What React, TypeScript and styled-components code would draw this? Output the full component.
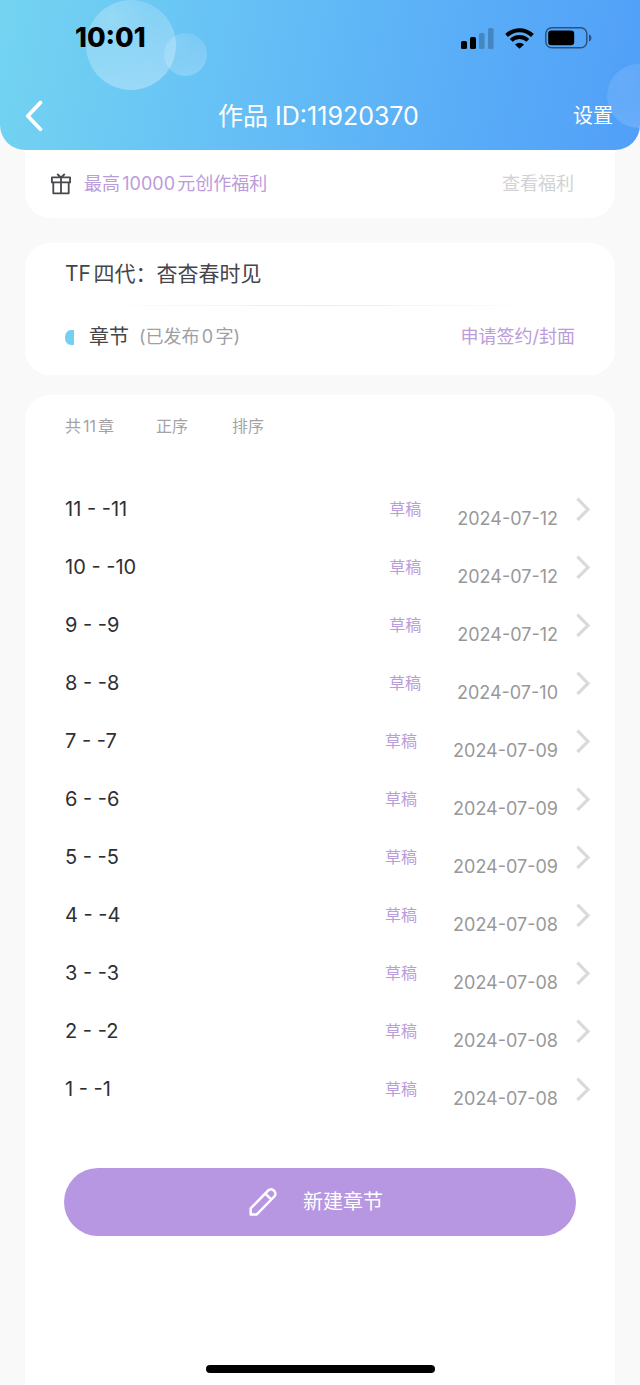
import React from 'react';
import styled, { createGlobalStyle } from 'styled-components';

const PURPLE = '#b797e2';
const PALE_PURPLE = '#bb9cdb';

const GlobalStyle = createGlobalStyle`
  * { box-sizing: border-box; }
  body {
    margin: 0;
    background: #f9f9f9;
    color: #45454a;
    font-family: Inter, "Noto Sans CJK SC", sans-serif;
    text-autospace: normal;
  }
  button {
    border: 0;
    padding: 0;
    background: none;
    color: inherit;
    font: inherit;
    cursor: pointer;
  }
  a { color: inherit; text-decoration: none; }
  h1, h2, ul { margin: 0; padding: 0; font-weight: 400; }
  svg { display: block; flex: none; }
`;

const Page = styled.div`
  display: flex;
  flex-direction: column;
  min-height: 100vh;
`;

const Header = styled.header`
  position: relative;
  overflow: hidden;
  border-radius: 0 0 25px 25px;
  background: linear-gradient(101deg, #73d3f1 2%, #68c3f5 32%, #5bb0f7 66%, #519ff9 100%);
`;

const Bubble = styled.span<{ $x: string; $y: number; $size: number; $strength: number }>`
  position: absolute;
  left: ${(p) => p.$x};
  top: ${(p) => p.$y}px;
  width: ${(p) => p.$size}px;
  height: ${(p) => p.$size}px;
  border-radius: 50%;
  opacity: ${(p) => p.$strength};
  background:
    radial-gradient(circle at 28% 18%, rgba(255, 255, 255, 0.35), transparent 38%),
    linear-gradient(165deg, rgba(255, 255, 255, 0.3), rgba(255, 255, 255, 0.75));
`;

const StatusBar = styled.div`
  position: relative;
  display: flex;
  align-items: center;
  justify-content: space-between;
  height: 76px;
  padding: 0 48px 0 75px;
  color: #000;
`;

const Clock = styled.time`
  font-size: 27px;
  line-height: 32px;
  font-weight: 800;
`;

const StatusIcons = styled.div`
  display: flex;
  align-items: center;
  gap: 11px;
`;

const NavBar = styled.nav`
  position: relative;
  display: grid;
  grid-template-columns: 1fr auto 1fr;
  align-items: center;
  height: 74px;
  padding: 6px 27px 0 24px;
  color: #fff;
`;

const BackButton = styled.button`
  justify-self: start;
`;

const PageTitle = styled.h1`
  font-size: 25px;
  line-height: 36px;
`;

const SettingsButton = styled.button`
  justify-self: end;
  font-size: 20px;
  line-height: 28px;
`;

const Content = styled.main`
  display: flex;
  flex: 1;
  flex-direction: column;
  padding: 0 25px;
`;

const Card = styled.section`
  border-radius: 25px;
  background: #fff;
`;

const BenefitCard = styled(Card)`
  display: flex;
  align-items: center;
  gap: 12px;
  height: 68px;
  margin-bottom: 25px;
  padding: 0 41px 0 25px;
  border-radius: 0 0 25px 25px;
  font-size: 18px;
  line-height: 26px;
`;

const BenefitText = styled.span`
  flex: 1;
  color: ${PALE_PURPLE};
`;

const BenefitLink = styled.a`
  color: #d2d2d4;
`;

const WorkCard = styled(Card)`
  margin-bottom: 20px;
  padding: 0 40px 7px;
`;

const WorkTitle = styled.h2`
  padding: 16px 0;
  font-size: 21px;
  line-height: 30px;
`;

const Divider = styled.div`
  height: 1px;
  background: linear-gradient(90deg, transparent 6%, #ececee 50%, transparent 94%);
`;

const SectionRow = styled.div`
  display: flex;
  align-items: center;
  height: 62px;
`;

const SectionMark = styled.span`
  width: 9px;
  height: 15px;
  margin-right: 15px;
  border-radius: 6px 0 0 6px / 7px 0 0 7px;
  background: #74d0f0;
`;

const SectionName = styled.h2`
  margin-right: 10px;
  font-size: 20px;
  line-height: 30px;
`;

const WordCount = styled.span`
  flex: 1;
  color: #a0a0a3;
  font-size: 18px;
  line-height: 26px;
`;

const ContractLink = styled.a`
  color: ${PALE_PURPLE};
  font-size: 18px;
  line-height: 26px;
`;

const ChapterCard = styled(Card)`
  display: flex;
  flex: 1;
  flex-direction: column;
  border-radius: 25px 25px 0 0;
`;

const Toolbar = styled.div`
  display: flex;
  align-items: center;
  gap: 42px;
  height: 62px;
  margin-bottom: 23px;
  padding: 0 40px;
  color: #a3a3a6;
  font-size: 16px;
  line-height: 24px;
`;

const SortButton = styled.button`
  margin-right: 2px;
`;

const ChapterList = styled.ul`
  list-style: none;
`;

const ChapterRow = styled.a`
  display: flex;
  align-items: center;
  height: 58px;
  padding: 0 24px 0 40px;
`;

const ChapterName = styled.span`
  flex: 1;
  color: #2f2f33;
  font-size: 20px;
  line-height: 28px;
`;

const ChapterState = styled.span`
  margin-right: 36px;
  color: ${PALE_PURPLE};
  font-size: 16px;
  line-height: 24px;
`;

const ChapterDate = styled.time`
  padding-top: 20px;
  margin-right: 17px;
  color: #98989a;
  font-size: 18px;
  line-height: 26px;
`;

const CreateButton = styled.button`
  display: flex;
  align-items: center;
  justify-content: center;
  gap: 26px;
  height: 68px;
  margin: 50px 39px 40px;
  padding-right: 8px;
  border-radius: 34px;
  background: ${PURPLE};
  color: #fff;
  font-size: 20px;
  line-height: 28px;
`;

const HomeIndicator = styled.div`
  align-self: center;
  width: 229px;
  height: 8px;
  margin: auto 0 12px;
  border-radius: 4px;
  background: #000;
`;

const SignalIcon = () => (
  <svg width="33" height="21" viewBox="0 0 33 21" aria-hidden="true">
    <rect x="0" y="13" width="6" height="8" rx="1.6" />
    <rect x="9" y="9" width="6" height="12" rx="1.6" />
    <rect x="18" y="5" width="5.6" height="16" rx="1.6" opacity="0.22" />
    <rect x="27" y="0" width="5.6" height="21" rx="1.6" opacity="0.22" />
  </svg>
);

const WifiIcon = () => (
  <svg width="29" height="21" viewBox="0 0 29 21" fill="none" stroke="#000" strokeWidth="4" aria-hidden="true">
    <path d="M1.6 7.5a18.4 18.4 0 0 1 25.8 0" />
    <path d="M6.2 12.4a11.6 11.6 0 0 1 16.6 0" />
    <path d="M14.5 20.8 10 16.5a6.4 6.4 0 0 1 9 0z" fill="#000" stroke="none" />
  </svg>
);

const BatteryIcon = () => (
  <svg width="47" height="22" viewBox="0 0 47 22" aria-hidden="true">
    <rect x="0.8" y="0.8" width="41" height="20" rx="6" fill="none" stroke="#000" strokeOpacity="0.5" strokeWidth="1.5" />
    <rect x="3.2" y="3.4" width="26" height="14.8" rx="3.2" />
    <path d="M44 7.2c3.2 1.4 3.2 6 0 7.4z" opacity="0.5" />
  </svg>
);

const BackIcon = () => (
  <svg width="20" height="32" viewBox="0 0 20 32" fill="none" stroke="#fff" strokeWidth="3.8" strokeLinecap="round" strokeLinejoin="round" aria-hidden="true">
    <path d="M16.4 2.6 3.8 16l12.6 13.2" />
  </svg>
);

const GiftIcon = () => (
  <svg width="22" height="22" viewBox="0 0 22 22" fill="none" stroke="#48484d" strokeWidth="1.8" strokeLinejoin="round" aria-hidden="true">
    <path d="M1.9 4.4h18.2v5H1.9zM3.3 9.4v10.9h15.4V9.4M11 4.4v15.9M7.2 1l3.8 3.4L14.8 1" />
  </svg>
);

const ChevronIcon = () => (
  <svg width="16" height="24" viewBox="0 0 16 24" fill="none" stroke="#dadadb" strokeWidth="3.2" aria-hidden="true">
    <path d="M2.4 1.6 13 12.4 2.4 23" />
  </svg>
);

const PencilIcon = () => (
  <svg width="28" height="28" viewBox="0 0 28 28" fill="none" stroke="#fff" strokeWidth="2.5" strokeLinejoin="round" aria-hidden="true">
    <path d="M1.7 26.4v-6.1L19.2 2.5a4 4 0 0 1 5.6 0l.5.5a4 4 0 0 1 0 5.5L7.8 26.4zM16.3 5.6l6.2 6" />
  </svg>
);

interface Chapter {
  no: number;
  date: string;
}

const chapters: Chapter[] = [
  { no: 11, date: '2024-07-12' },
  { no: 10, date: '2024-07-12' },
  { no: 9, date: '2024-07-12' },
  { no: 8, date: '2024-07-10' },
  { no: 7, date: '2024-07-09' },
  { no: 6, date: '2024-07-09' },
  { no: 5, date: '2024-07-09' },
  { no: 4, date: '2024-07-08' },
  { no: 3, date: '2024-07-08' },
  { no: 2, date: '2024-07-08' },
  { no: 1, date: '2024-07-08' },
];

export default function App() {
  return (
    <Page>
      <GlobalStyle />
      <Header>
        <Bubble $x="86px" $y={0} $size={90} $strength={0.45} />
        <Bubble $x="164px" $y={33} $size={43} $strength={0.3} />
        <Bubble $x="calc(100% - 33px)" $y={64} $size={64} $strength={0.2} />
        <StatusBar>
          <Clock>10:01</Clock>
          <StatusIcons>
            <SignalIcon />
            <WifiIcon />
            <BatteryIcon />
          </StatusIcons>
        </StatusBar>
        <NavBar>
          <BackButton type="button" aria-label="返回">
            <BackIcon />
          </BackButton>
          <PageTitle>作品 ID:11920370</PageTitle>
          <SettingsButton type="button">设置</SettingsButton>
        </NavBar>
      </Header>
      <Content>
        <BenefitCard>
          <GiftIcon />
          <BenefitText>最高10000元创作福利</BenefitText>
          <BenefitLink href="#benefits">查看福利</BenefitLink>
        </BenefitCard>
        <WorkCard>
          <WorkTitle>TF四代：杳杳春时见</WorkTitle>
          <Divider />
          <SectionRow>
            <SectionMark />
            <SectionName>章节</SectionName>
            <WordCount>(已发布0字)</WordCount>
            <ContractLink href="#contract">申请签约/封面</ContractLink>
          </SectionRow>
        </WorkCard>
        <ChapterCard>
          <Toolbar>
            <span>共11章</span>
            <SortButton type="button">正序</SortButton>
            <SortButton type="button">排序</SortButton>
          </Toolbar>
          <ChapterList>
            {chapters.map(({ no, date }) => (
              <li key={no}>
                <ChapterRow href={`#chapter-${no}`}>
                  <ChapterName>{`${no} - -${no}`}</ChapterName>
                  <ChapterState>草稿</ChapterState>
                  <ChapterDate dateTime={date}>{date}</ChapterDate>
                  <ChevronIcon />
                </ChapterRow>
              </li>
            ))}
          </ChapterList>
          <CreateButton type="button">
            <PencilIcon />
            新建章节
          </CreateButton>
          <HomeIndicator />
        </ChapterCard>
      </Content>
    </Page>
  );
}
